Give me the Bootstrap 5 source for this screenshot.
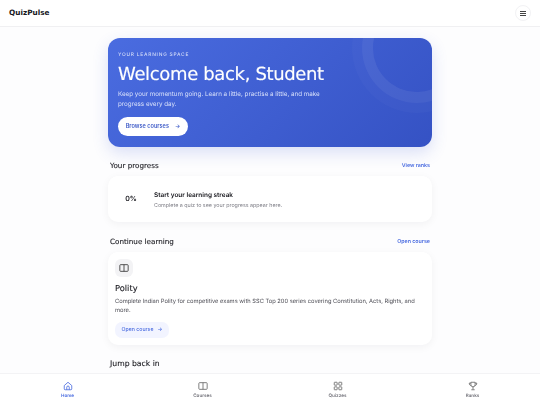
<!doctype html>
<html lang="en"><head><meta charset="utf-8"><title>QuizPulse</title>
<link href="https://cdn.jsdelivr.net/npm/bootstrap@5.3.0/dist/css/bootstrap.min.css" rel="stylesheet">
<style>
html,body{height:405px;overflow:hidden}
body{background:#fdfdfe;font-family:Inter,"Liberation Sans",sans-serif;color:#16161c;text-rendering:geometricPrecision}
.disp{font-family:"DejaVu Sans",sans-serif}
.topbar{height:27px;background:#fff;border-bottom:1px solid #f0f0f2;padding:0 9px}
.brand{font-size:7.3px;font-weight:700}
.menubtn{width:16px;height:16px;border:1px solid #f2f2f4;background:#fff;border-radius:50%;padding:0}
.shell{width:324px;margin:0 auto;padding-top:11px;will-change:transform}
.hero{height:109px;border-radius:12px;background:linear-gradient(135deg,#4a6ce0,#3552c4);box-shadow:0 6px 16px rgba(60,90,210,.18);padding:13px 10px;color:#fff;overflow:hidden;position:relative}
.ring{position:absolute;width:88px;height:88px;left:265px;top:-34px;border-radius:50%;box-shadow:0 0 0 11px rgba(255,255,255,.05),0 0 0 21px rgba(255,255,255,.025)}
.eyebrow{font-size:4.9px;font-weight:500;letter-spacing:.75px;color:#d5ddf8;line-height:8px}
.hero h1{font-size:18px;font-weight:400;line-height:22px;margin:5px 0 3px;letter-spacing:-.35px;-webkit-text-stroke:.15px #fff}
.lede{font-size:6.25px;line-height:10px;color:#d8e0fa;width:215px;margin:0 0 8px}
.herobtn{font-size:5.6px;font-weight:600;height:19px;width:70px;border-radius:10px;background:#fff;color:#3f5cc8;border:0;padding:0;gap:6px}
.sechead{height:13px;padding:1px 2px 0;margin-top:12px}
.sechead h2{font-size:7.2px;font-weight:400;margin:0;-webkit-text-stroke:.1px #16161c}
.sechead h2.wider{font-size:7.7px}
.seclink{font-size:5.3px;font-weight:600;color:#4a6ce0;text-decoration:none;padding-top:2px}
.panel{background:#fff;border:0;border-radius:10px;box-shadow:0 2px 8px rgba(20,20,40,.05);margin-top:4px}
.pct{width:46px;font-size:7px;font-weight:600;text-align:center}
.pt{font-size:6.45px;font-weight:600;line-height:10px}
.ps{font-size:5.35px;color:#7d7d85;line-height:8px;margin-top:2px}
.tile{width:18px;height:18px;border-radius:6px;background:#f3f3f5}
.ctitle{font-size:8.3px;font-weight:400;line-height:12px;margin:5px 0 3px;-webkit-text-stroke:.1px #16161c}
.cdesc{font-size:5.76px;color:#4c4c54;line-height:9px;margin:0 0 7px}
.openbtn{width:54px;height:16px;border-radius:7px;background:#f2f4ff;color:#4a6ce0;font-size:5.2px;font-weight:500;border:0;padding:0}
.bottombar{position:fixed;left:0;right:0;bottom:0;height:32px;background:#fff;border-top:1px solid #f3f3f5}
.tabitem{flex:1 1 0;font-size:4.6px;color:#6f6f77;font-weight:600;text-decoration:none;line-height:7px;padding-top:7px;will-change:transform}
.tabitem.on{color:#4a6ce0}
.tabitem svg{display:block;margin:0 auto 2px}
.gap-a{height:46px;padding-top:1px}.gap-b{height:93px;padding:7px 7px 0}
.secb{margin-top:13px}
</style></head><body>
<nav class="topbar d-flex align-items-center justify-content-between">
<span class="brand disp">QuizPulse</span>
<button class="menubtn d-flex align-items-center justify-content-center" aria-label="Menu"><svg width="6" height="5" viewBox="0 0 6 5"><path d="M0 .5h6M0 2.5h6M0 4.5h6" stroke="#444" stroke-width="1"/></svg></button>
</nav>
<main class="shell">
<section class="hero">
<div class="ring"></div>
<div class="eyebrow">YOUR LEARNING SPACE</div>
<h1 class="disp">Welcome back, Student</h1>
<p class="lede">Keep your momentum going. Learn a little, practise a little, and make progress every day.</p>
<button class="herobtn d-flex align-items-center justify-content-center">Browse courses <span>→</span></button>
</section>
<div class="sechead d-flex align-items-center justify-content-between"><h2 class="disp">Your progress</h2><a class="seclink" href="#">View ranks</a></div>
<section class="panel gap-a d-flex align-items-center"><div class="pct">0%</div><div><div class="pt">Start your learning streak</div><div class="ps">Complete a quiz to see your progress appear here.</div></div></section>
<div class="sechead secb d-flex align-items-center justify-content-between"><h2 class="disp">Continue learning</h2><a class="seclink" href="#">Open course</a></div>
<section class="panel gap-b">
<div class="tile d-flex align-items-center justify-content-center"><svg width="10" height="10" viewBox="0 0 24 24" fill="none" stroke="#333" stroke-width="2"><rect x="2" y="4" width="20" height="16" rx="2"/><path d="M12 4v16"/></svg></div>
<div class="ctitle disp">Polity</div>
<p class="cdesc">Complete Indian Polity for competitive exams with SSC Top 200 series covering Constitution, Acts, Rights, and more.</p>
<button class="openbtn d-flex align-items-center justify-content-center gap-1">Open course <span>→</span></button>
</section>
<div class="sechead d-flex align-items-center"><h2 class="disp wider">Jump back in</h2></div>
</main>
<nav class="bottombar d-flex text-center">
<a class="tabitem on" href="#"><svg width="10" height="10" viewBox="0 0 24 24" fill="none" stroke="#4a6ce0" stroke-width="2"><path d="M3 11 12 3l9 8v8a2 2 0 0 1-2 2H5a2 2 0 0 1-2-2z"/><path d="M9 21v-6a3 3 0 0 1 6 0v6"/></svg>Home</a>
<a class="tabitem" href="#"><svg width="10" height="10" viewBox="0 0 24 24" fill="none" stroke="#666" stroke-width="2"><rect x="2" y="4" width="20" height="16" rx="2"/><path d="M12 4v16"/></svg>Courses</a>
<a class="tabitem" href="#"><svg width="10" height="10" viewBox="0 0 24 24" fill="none" stroke="#666" stroke-width="2"><rect x="3" y="3" width="7" height="7" rx="1"/><rect x="14" y="3" width="7" height="7" rx="1"/><rect x="3" y="14" width="7" height="7" rx="1"/><rect x="14" y="14" width="7" height="7" rx="1"/></svg>Quizzes</a>
<a class="tabitem" href="#"><svg width="10" height="10" viewBox="0 0 24 24" fill="none" stroke="#666" stroke-width="2"><path d="M7 3h10v6a5 5 0 0 1-10 0z"/><path d="M7 5H3c0 4 2 6 4 6M17 5h4c0 4-2 6-4 6M12 14v6M8 21h8"/></svg>Ranks</a>
</nav>
</body></html>
